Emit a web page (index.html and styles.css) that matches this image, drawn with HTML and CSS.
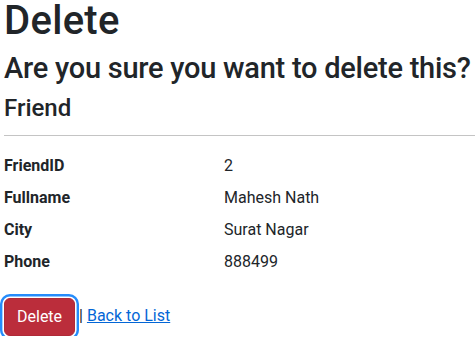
FILE: index.html
```html
<!DOCTYPE html>
<html lang="en">
<head>
    <meta charset="UTF-8">
    <meta name="viewport" content="width=device-width, initial-scale=1.0">
    <title>Delete - Friend</title>
    <link rel="stylesheet" href="styles.css">
</head>
<body>
    <main class="page">
        <h1 class="title">Delete</h1>
        <h3 class="question">Are you sure you want to delete this?</h3>
        <div>
            <h4 class="entity">Friend</h4>
            <hr class="divider">
            <dl class="details">
                <dt>FriendID</dt>
                <dd>2</dd>
                <dt>Fullname</dt>
                <dd>Mahesh Nath</dd>
                <dt>City</dt>
                <dd>Surat Nagar</dd>
                <dt>Phone</dt>
                <dd>888499</dd>
            </dl>
            <form class="actions" onsubmit="return false">
                <input type="submit" value="Delete" class="btn-danger"> |
                <a href="#" class="back-link">Back to List</a>
            </form>
        </div>
    </main>
</body>
</html>
```

FILE: styles.css
```css
body {
    font-family: Roboto, "Open Sans", sans-serif;
    font-size: 16px;
    line-height: 1.5;
    color: #212529;
    background-color: #fff;
    margin: 0;
    padding: 0;
}
.page {
    padding: 1px 4px 0 4px;
    overflow: hidden;
}
.title,
.question,
.entity {
    margin: 0 0 8px 0;
    line-height: 1.2;
    font-weight: 500;
}
.title {
    font-size: 40px;
    line-height: 40px;
    margin-bottom: 10px;
    letter-spacing: 0.3px;
}
.question {
    font-size: 29px;
    letter-spacing: -0.25px;
    white-space: nowrap;
}
.entity {
    font-size: 24px;
}
.divider {
    margin: 12px -4px 18px 0;
    border: none;
    border-top: 1px solid #c4c4c4;
}
.details {
    display: grid;
    grid-template-columns: 220px 1fr;
    margin: 0 0 16px 0;
}
.details dt {
    font-weight: 700;
    margin-bottom: 8px;
}
.details dd {
    margin: 0 0 8px 0;
}
.actions {
    margin: 0;
}
.btn-danger {
    font-family: inherit;
    font-size: 16px;
    line-height: 24px;
    padding: 6px 12px;
    border: 1px solid #b02a37;
    border-radius: 6px;
    color: #fff;
    background-color: #bb2d3b;
    box-shadow: 0 0 0 1.6px #fff, 0 0 0 4px #258cfb;
    cursor: pointer;
    vertical-align: middle;
}
.back-link {
    color: #0366d6;
    text-decoration: underline;
}
```
